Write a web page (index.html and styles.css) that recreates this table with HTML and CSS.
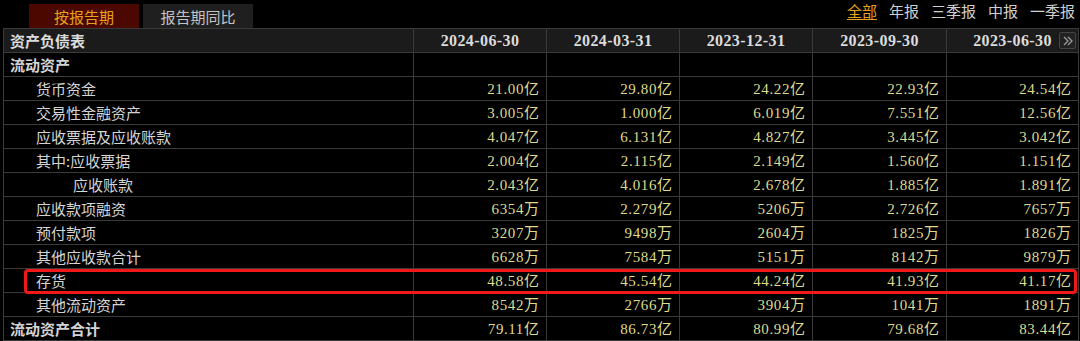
FILE: index.html
```html
<!DOCTYPE html>
<html>
<head>
  <meta charset="UTF-8">
  <title>资产负债表</title>
  <link rel="stylesheet" href="styles.css">
</head>
<body>
  <div class="barra">
    <div class="pestanas">
      <span class="pestana activa">按报告期</span>
      <span class="pestana">报告期同比</span>
    </div>
    <div class="filtros">
      <span class="filtro activo">全部</span>
      <span class="filtro">年报</span>
      <span class="filtro">三季报</span>
      <span class="filtro">中报</span>
      <span class="filtro">一季报</span>
    </div>
  </div>

  <div class="contenedor">
    <table class="tabla">
      <colgroup>
        <col style="width:410px">
        <col style="width:133px">
        <col style="width:133px">
        <col style="width:133px">
        <col style="width:134px">
        <col style="width:132px">
      </colgroup>
      <thead>
        <tr>
          <th class="titulo">资产负债表</th>
          <th>2024-06-30</th>
          <th>2024-03-31</th>
          <th>2023-12-31</th>
          <th>2023-09-30</th>
          <th class="ultima">2023-06-30<span class="siguiente">
            <svg width="12" height="12" viewBox="0 0 12 12"><path d="M2 2l4 4-4 4M6 2l4 4-4 4" fill="none" stroke="#9a9a9a" stroke-width="1.3"/></svg>
          </span></th>
        </tr>
      </thead>
      <tbody>
        <tr class="seccion"><td>流动资产</td><td></td><td></td><td></td><td></td><td></td></tr>
        <tr><td class="n1">货币资金</td><td>21.00<u>亿</u></td><td>29.80<u>亿</u></td><td>24.22<u>亿</u></td><td>22.93<u>亿</u></td><td>24.54<u>亿</u></td></tr>
        <tr><td class="n1">交易性金融资产</td><td>3.005<u>亿</u></td><td>1.000<u>亿</u></td><td>6.019<u>亿</u></td><td>7.551<u>亿</u></td><td>12.56<u>亿</u></td></tr>
        <tr><td class="n1">应收票据及应收账款</td><td>4.047<u>亿</u></td><td>6.131<u>亿</u></td><td>4.827<u>亿</u></td><td>3.445<u>亿</u></td><td>3.042<u>亿</u></td></tr>
        <tr><td class="n1">其中:应收票据</td><td>2.004<u>亿</u></td><td>2.115<u>亿</u></td><td>2.149<u>亿</u></td><td>1.560<u>亿</u></td><td>1.151<u>亿</u></td></tr>
        <tr><td class="n2">应收账款</td><td>2.043<u>亿</u></td><td>4.016<u>亿</u></td><td>2.678<u>亿</u></td><td>1.885<u>亿</u></td><td>1.891<u>亿</u></td></tr>
        <tr><td class="n1">应收款项融资</td><td>6354<u>万</u></td><td>2.279<u>亿</u></td><td>5206<u>万</u></td><td>2.726<u>亿</u></td><td>7657<u>万</u></td></tr>
        <tr><td class="n1">预付款项</td><td>3207<u>万</u></td><td>9498<u>万</u></td><td>2604<u>万</u></td><td>1825<u>万</u></td><td>1826<u>万</u></td></tr>
        <tr><td class="n1">其他应收款合计</td><td>6628<u>万</u></td><td>7584<u>万</u></td><td>5151<u>万</u></td><td>8142<u>万</u></td><td>9879<u>万</u></td></tr>
        <tr><td class="n1">存货</td><td>48.58<u>亿</u></td><td>45.54<u>亿</u></td><td>44.24<u>亿</u></td><td>41.93<u>亿</u></td><td>41.17<u>亿</u></td></tr>
        <tr><td class="n1">其他流动资产</td><td>8542<u>万</u></td><td>2766<u>万</u></td><td>3904<u>万</u></td><td>1041<u>万</u></td><td>1891<u>万</u></td></tr>
        <tr class="seccion"><td>流动资产合计</td><td>79.11<u>亿</u></td><td>86.73<u>亿</u></td><td>80.99<u>亿</u></td><td>79.68<u>亿</u></td><td>83.44<u>亿</u></td></tr>
      </tbody>
    </table>
    <!-- recuadro rojo sobre la fila de 存货 -->
    <div class="resaltado"></div>
  </div>
</body>
</html>
```

FILE: styles.css
```css
body {
  margin: 0;
  padding: 0;
  background-color: #000;
  font-family: "Noto Sans CJK SC", sans-serif;
  color: #d4d4d4;
  width: 1080px;
  height: 341px;
  overflow: hidden;
}

.barra {
  display: flex;
  justify-content: space-between;
  align-items: flex-start;
  height: 28px;
}

.pestanas {
  display: flex;
  gap: 4px;
  padding: 4px 0 0 29px;
}

.pestana {
  display: flex;
  align-items: center;
  justify-content: center;
  width: 110px;
  height: 24px;
  background-color: #1f1f1f;
  color: #c4c4c4;
  font-size: 15px;
}

.pestana.activa {
  background-color: #4a0800;
  color: #e8a21c;
}

.filtros {
  display: flex;
  gap: 12px;
  padding: 1px 5px 0 0;
}

.filtro {
  font-size: 15px;
  line-height: 20px;
  color: #d0d0d0;
}

.filtro.activo {
  color: #e8a21c;
  text-decoration: underline;
  text-underline-offset: 2px;
}

.contenedor {
  position: relative;
  margin-left: 3px;
  width: 1075px;
}

.tabla {
  border-collapse: collapse;
  table-layout: fixed;
  width: 1075px;
}

.tabla th,
.tabla td {
  border: 1px solid #3a3a3a;
  height: 23px;
  padding: 0 7px 0 0;
  font-size: 15px;
  line-height: 22px;
  white-space: nowrap;
  overflow: hidden;
}

.tabla th {
  background-color: #1b1b1b;
  color: #dcdcdc;
  font-family: "Liberation Serif", serif;
  font-size: 16px;
  font-weight: bold;
  letter-spacing: 0.4px;
  text-align: center;
  padding: 0;
}

.tabla th.titulo {
  font-family: "Noto Sans CJK SC", sans-serif;
  font-size: 15px;
  letter-spacing: 0;
  text-align: left;
  padding-left: 6px;
}

.tabla th.ultima {
  position: relative;
}

.siguiente {
  position: absolute;
  right: 2px;
  top: 3px;
  width: 15px;
  height: 15px;
  border: 1px solid #444;
  border-radius: 2px;
  background-color: #222;
  display: flex;
  align-items: center;
  justify-content: center;
}

.tabla td {
  text-align: right;
  color: #dedb8c;
  font-family: "Liberation Serif", serif;
  letter-spacing: 0.6px;
}

.tabla td u {
  text-decoration: none;
  font-family: "Noto Sans CJK SC", sans-serif;
  letter-spacing: 0;
}

.tabla td:first-child {
  text-align: left;
  color: #d4d4d4;
  font-family: "Noto Sans CJK SC", sans-serif;
  letter-spacing: 0;
}

.tabla td.n1 {
  padding-left: 32px;
}

.tabla td.n2 {
  padding-left: 69px;
}

.tabla tr.seccion td:first-child {
  font-weight: bold;
  padding-left: 6px;
}

.resaltado {
  position: absolute;
  left: 21px;
  top: 241px;
  width: 1047px;
  height: 19px;
  border: 3px solid #f01818;
  border-radius: 4px;
  pointer-events: none;
}
```
